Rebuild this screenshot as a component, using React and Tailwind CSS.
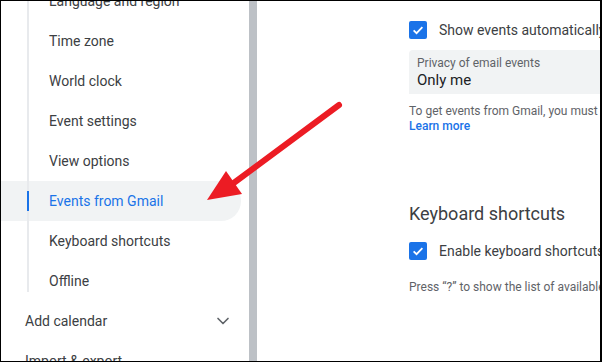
import { ChevronDown } from "lucide-react";

const subItems = [
    "Language and region",
    "Time zone",
    "World clock",
    "Event settings",
    "View options",
    "Events from Gmail",
    "Keyboard shortcuts",
    "Offline",
];

function Checkbox() {
    return (
        <div className="w-[18px] h-[18px] rounded-[2px] bg-[#1a73e8] flex items-center justify-center shrink-0">
            <svg width="14" height="14" viewBox="0 0 24 24">
                <path d="M4.5 12.5l5 5L19.5 7" fill="none" stroke="white" strokeWidth="3" />
            </svg>
        </div>
    );
}

function SideRow({ label, active, last }) {
    return (
        <div className={`flex h-10 shrink-0 w-[240px] items-stretch ${active ? 'bg-[#f1f3f4] rounded-r-full' : ''}`}>
            <div className={`ml-[26px] w-[2px] bg-[#e8eaed] flex items-center ${last ? 'h-[31px]' : 'h-full'}`}>
                {active && <div className="h-5 w-full bg-[#1a73e8]"></div>}
            </div>
            <div className={`ml-5 flex items-center text-[14px] ${active ? 'text-[#1a73e8]' : 'text-[#3c4043]'}`}>
                {label}
            </div>
        </div>
    );
}

export default function App() {
    return (
        <div
            className="relative w-[602px] h-[362px] overflow-hidden bg-white border border-r-2 border-black flex"
            style={{ fontFamily: "Roboto, 'Liberation Sans', sans-serif" }}
        >
            {/* sidebar */}
            <div className="w-[248px] shrink-0 flex flex-col -mt-5">
                {subItems.map((item, i) => (
                    <SideRow
                        key={item}
                        label={item}
                        active={item === "Events from Gmail"}
                        last={i === subItems.length - 1}
                    />
                ))}
                <div className="flex h-10 shrink-0 items-center justify-between pl-6 pr-4 text-[14px] text-[#3c4043]">
                    <span>Add calendar</span>
                    <ChevronDown size={20} strokeWidth={2} className="text-[#5f6368]" />
                </div>
                <div className="flex h-10 shrink-0 items-center pl-6 text-[14px] text-[#3c4043]">Import &amp; export</div>
            </div>

            {/* scrollbar */}
            <div className="w-2 shrink-0 bg-[#bdc1c6]"></div>

            {/* content */}
            <div className="flex-1 min-w-0 pl-[152px] pt-5 flex flex-col">
                <div className="flex items-center gap-3 h-[18px] whitespace-nowrap">
                    <Checkbox />
                    <span className="text-[14px] text-[#3c4043]">Show events automatically from Gmail</span>
                </div>

                <div className="mt-[11px] h-[44px] shrink-0 bg-[#f1f3f4] rounded-tl px-2 pt-[5px] whitespace-nowrap">
                    <div className="text-[12px] leading-4 text-[#5f6368]">Privacy of email events</div>
                    <div className="text-[15px] leading-[18px] text-[#202124]">Only me</div>
                </div>

                <div className="mt-[9px] text-[12px] leading-4 text-[#5f6368] whitespace-nowrap">
                    To get events from Gmail, you must turn on Smart features
                </div>
                <div className="text-[12px] leading-[14px] text-[#1a73e8] font-medium">Learn more</div>

                <div className="mt-[69px] text-[18px] leading-6 text-[#3c4043] whitespace-nowrap">Keyboard shortcuts</div>

                <div className="mt-4 flex items-center gap-3 h-[18px] whitespace-nowrap">
                    <Checkbox />
                    <span className="text-[14px] text-[#3c4043]">Enable keyboard shortcuts</span>
                </div>

                <div className="mt-[19px] text-[12px] leading-4 text-[#5f6368] whitespace-nowrap">
                    Press “?” to show the list of available keyboard shortcuts
                </div>
            </div>

            {/* annotation arrow */}
            <svg className="absolute left-0 top-0 pointer-events-none" width="602" height="362" viewBox="0 0 602 362">
                <line x1="338" y1="104" x2="230" y2="184" stroke="#ec1c24" strokeWidth="6" strokeLinecap="round" />
                <polygon points="206,199 225,170 241,193" fill="#ec1c24" />
            </svg>
        </div>
    );
}
